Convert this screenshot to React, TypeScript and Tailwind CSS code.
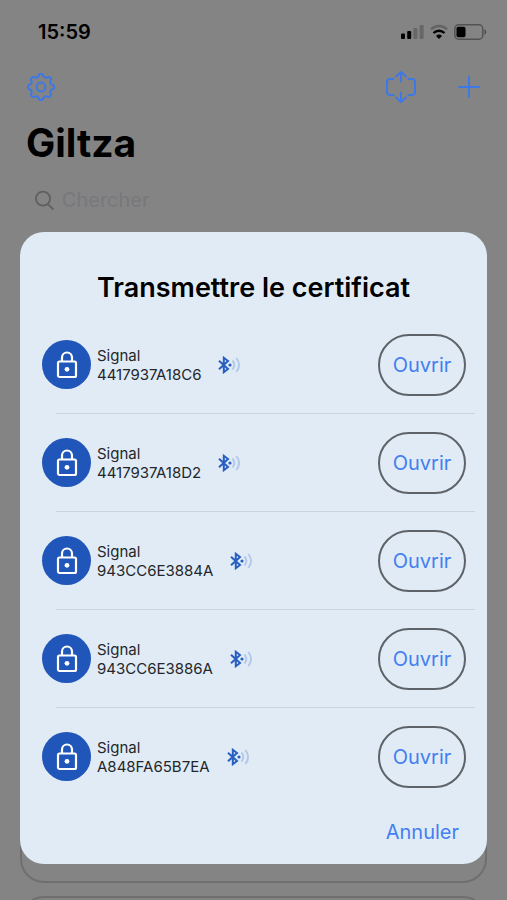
interface Lock {
  id:   string
  name: string
}

const LOCKS: Lock[] = [
  { id: '4417937A18C6', name: 'Signal' },
  { id: '4417937A18D2', name: 'Signal' },
  { id: '943CC6E3884A', name: 'Signal' },
  { id: '943CC6E3886A', name: 'Signal' },
  { id: 'A848FA65B7EA', name: 'Signal' },
]

// Outline of a gear with eight soft teeth, centred on 0,0
const GEAR_POINTS = Array.from({ length: 160 }, (_, i) => {
  const angle = (i / 160) * Math.PI * 2
  const r = 11.7 + 1.5 * Math.tanh(1.6 * Math.cos(angle * 8))
  return `${(r * Math.sin(angle)).toFixed(2)},${(-r * Math.cos(angle)).toFixed(2)}`
}).join(' ')

function GearIcon() {
  return (
    <svg width="30" height="30" viewBox="-15 -15 30 30" fill="none" stroke="currentColor" strokeWidth="2" strokeLinejoin="round" aria-hidden="true">
      <polygon points={GEAR_POINTS} />
      <circle r="4.4" />
    </svg>
  )
}

function TransferIcon() {
  return (
    <svg width="32" height="34" viewBox="0 0 32 34" fill="none" stroke="currentColor" strokeWidth="2" strokeLinecap="round" strokeLinejoin="round" aria-hidden="true">
      <path d="M8.5 9H5a3 3 0 0 0-3 3v10a3 3 0 0 0 3 3h3.5M23.5 9H27a3 3 0 0 1 3 3v10a3 3 0 0 1-3 3h-3.5" />
      <path d="M16 11.5V2.5M11 6.5L16 2l5 4.5M16 22.500v9M11 27.500L16 32l5-4.500" />
    </svg>
  )
}

function PlusIcon() {
  return (
    <svg width="24" height="24" viewBox="0 0 24 24" fill="none" stroke="currentColor" strokeWidth="2" strokeLinecap="round" aria-hidden="true">
      <path d="M12 2v20M2 12h20" />
    </svg>
  )
}

function SearchIcon() {
  return (
    <svg width="20" height="21" viewBox="0 0 20 21" fill="none" stroke="currentColor" strokeWidth="1.9" strokeLinecap="round" aria-hidden="true">
      <circle cx="8.5" cy="8.5" r="7.5" />
      <path d="M14 14.500l5 5" />
    </svg>
  )
}

function StatusIcons() {
  return (
    <div className="flex items-center gap-1.5" aria-hidden="true">
      <svg width="23" height="16" viewBox="0 0 23 16" fill="black">
        <rect x="0" y="9.5" width="4" height="5.5" rx="1" />
        <rect x="6.2" y="7" width="4" height="8" rx="1" />
        <rect x="12.4" y="4" width="4" height="11" rx="1" opacity="0.22" />
        <rect x="18.6" y="1" width="4" height="14" rx="1" opacity="0.22" />
      </svg>
      <svg width="18" height="16" viewBox="0 0 18 16" fill="none" stroke="black" strokeWidth="2.4">
        <path d="M1 5.300a11.500 11.500 0 0 1 16 0" opacity="0.25" />
        <path d="M3.500 9a8 8 0 0 1 11 0" />
        <path d="M9 15L6 12a4.300 4.300 0 0 1 6 0z" fill="black" stroke="none" />
      </svg>
      <svg width="33" height="16" viewBox="0 0 33 16">
        <rect x="0.8" y="0.8" width="28" height="14.4" rx="4" fill="none" stroke="black" strokeOpacity="0.38" strokeWidth="1.5" />
        <rect x="2.5" y="2.8" width="9" height="10.4" rx="1.6" />
        <path d="M30.500 5.500c2.200.6 2.200 4.400 0 5z" fillOpacity="0.45" />
      </svg>
    </div>
  )
}

function LockBadge() {
  return (
    <div className="flex size-[49px] shrink-0 items-center justify-center rounded-full bg-[#2056b9] text-white">
      <svg width="22" height="28" viewBox="0 0 22 28" fill="none" stroke="currentColor" strokeWidth="2.2" aria-hidden="true">
        <rect x="2" y="10.5" width="18" height="15.5" rx="1.5" />
        <path d="M6 10.500V6.500a5 5 0 0 1 10 0v4" />
        <circle cx="11" cy="18.3" r="2.4" fill="currentColor" stroke="none" />
      </svg>
    </div>
  )
}

function BluetoothIcon() {
  return (
    <svg width="24" height="18" viewBox="0 0 24 18" fill="none" stroke="#2860c2" strokeWidth="2" aria-hidden="true">
      <path d="M2 4.800l9 8.200-4.200 3.200V1.800L11 5l-9 8.200" />
      <circle cx="13" cy="9" r="1.6" fill="#2860c2" stroke="none" />
      <path d="M15.500 4.500c2.300 2.800 2.300 6.200 0 9" stroke="#b4c9ea" />
      <path d="M19.300 2c3.400 4.300 3.400 9.700 0 14" stroke="#b4c9ea" />
    </svg>
  )
}

function LockRow({ lock }: { lock: Lock }) {
  return (
    <div className="flex h-[97px] items-center pr-[21px] pl-[22px]">
      <LockBadge />
      <div className="mr-4 ml-[6px] text-[15px] leading-[19px] text-[#23272c]">
        <p>{lock.name}</p>
        <p>{lock.id}</p>
      </div>
      <BluetoothIcon />
      <button
        type="button"
        aria-label={`Ouvrir ${lock.id}`}
        className="ml-auto h-[62px] w-[88px] rounded-full border-2 border-[#5d6368] text-[20px] text-[#437ff0]"
      >
        Ouvrir
      </button>
    </div>
  )
}

export default function App() {
  return (
    <div className="relative h-screen overflow-hidden bg-[#848484] font-['Inter',sans-serif]">
      {/* Status bar */}
      <div className="flex h-16 items-center justify-between pr-5 pl-[38px]">
        <span className="text-[20px] font-semibold text-black">15:59</span>
        <StatusIcons />
      </div>

      {/* Toolbar */}
      <header className="px-[26px]">
        <div className="flex h-[46px] items-center text-[#3e78e6]">
          <button type="button" aria-label="Réglages"><GearIcon /></button>
          <button type="button" aria-label="Transmettre" className="mr-10 ml-auto"><TransferIcon /></button>
          <button type="button" aria-label="Ajouter"><PlusIcon /></button>
        </div>
        <h1 className="mt-2 text-[39px] leading-[50px] font-bold text-black">Giltza</h1>
        <label className="mt-3 flex h-10 items-center gap-2 pl-[9px] text-[#5f5f5f]">
          <SearchIcon />
          <input
            type="search"
            aria-label="Chercher"
            placeholder="Chercher"
            className="w-full bg-transparent text-[20px] outline-none placeholder:text-[#78787c]"
          />
        </label>
      </header>

      {/* Cards under the sheet */}
      <main className="mt-7 flex flex-col gap-[13px] px-5">
        <section className="h-[311px] shrink-0 rounded-3xl border-2 border-[#6f6f6f]" />
        <section className="h-[311px] shrink-0 rounded-3xl border-2 border-[#6f6f6f]" />
        <section className="h-[311px] shrink-0 rounded-3xl border-2 border-[#6f6f6f]" />
      </main>

      {/* Certificate sheet */}
      <div
        role="dialog"
        aria-modal="true"
        aria-labelledby="sheet-title"
        className="absolute inset-x-5 top-[232px] rounded-3xl bg-[#e1ebf5] pt-10 pb-4"
      >
        <h2 id="sheet-title" className="mb-3 text-center text-[27px] leading-8 font-semibold text-black">
          Transmettre le certificat
        </h2>
        <ul>
          {LOCKS.map((lock, i) => (
            <li key={lock.id}>
              {i > 0 && <hr className="mr-3 ml-9 border-[#cbd4de]" />}
              <LockRow lock={lock} />
            </li>
          ))}
        </ul>
        <div className="flex justify-end pt-[11px] pr-7">
          <button type="button" className="text-[20px] leading-8 text-[#437ff0]">Annuler</button>
        </div>
      </div>
    </div>
  )
}
